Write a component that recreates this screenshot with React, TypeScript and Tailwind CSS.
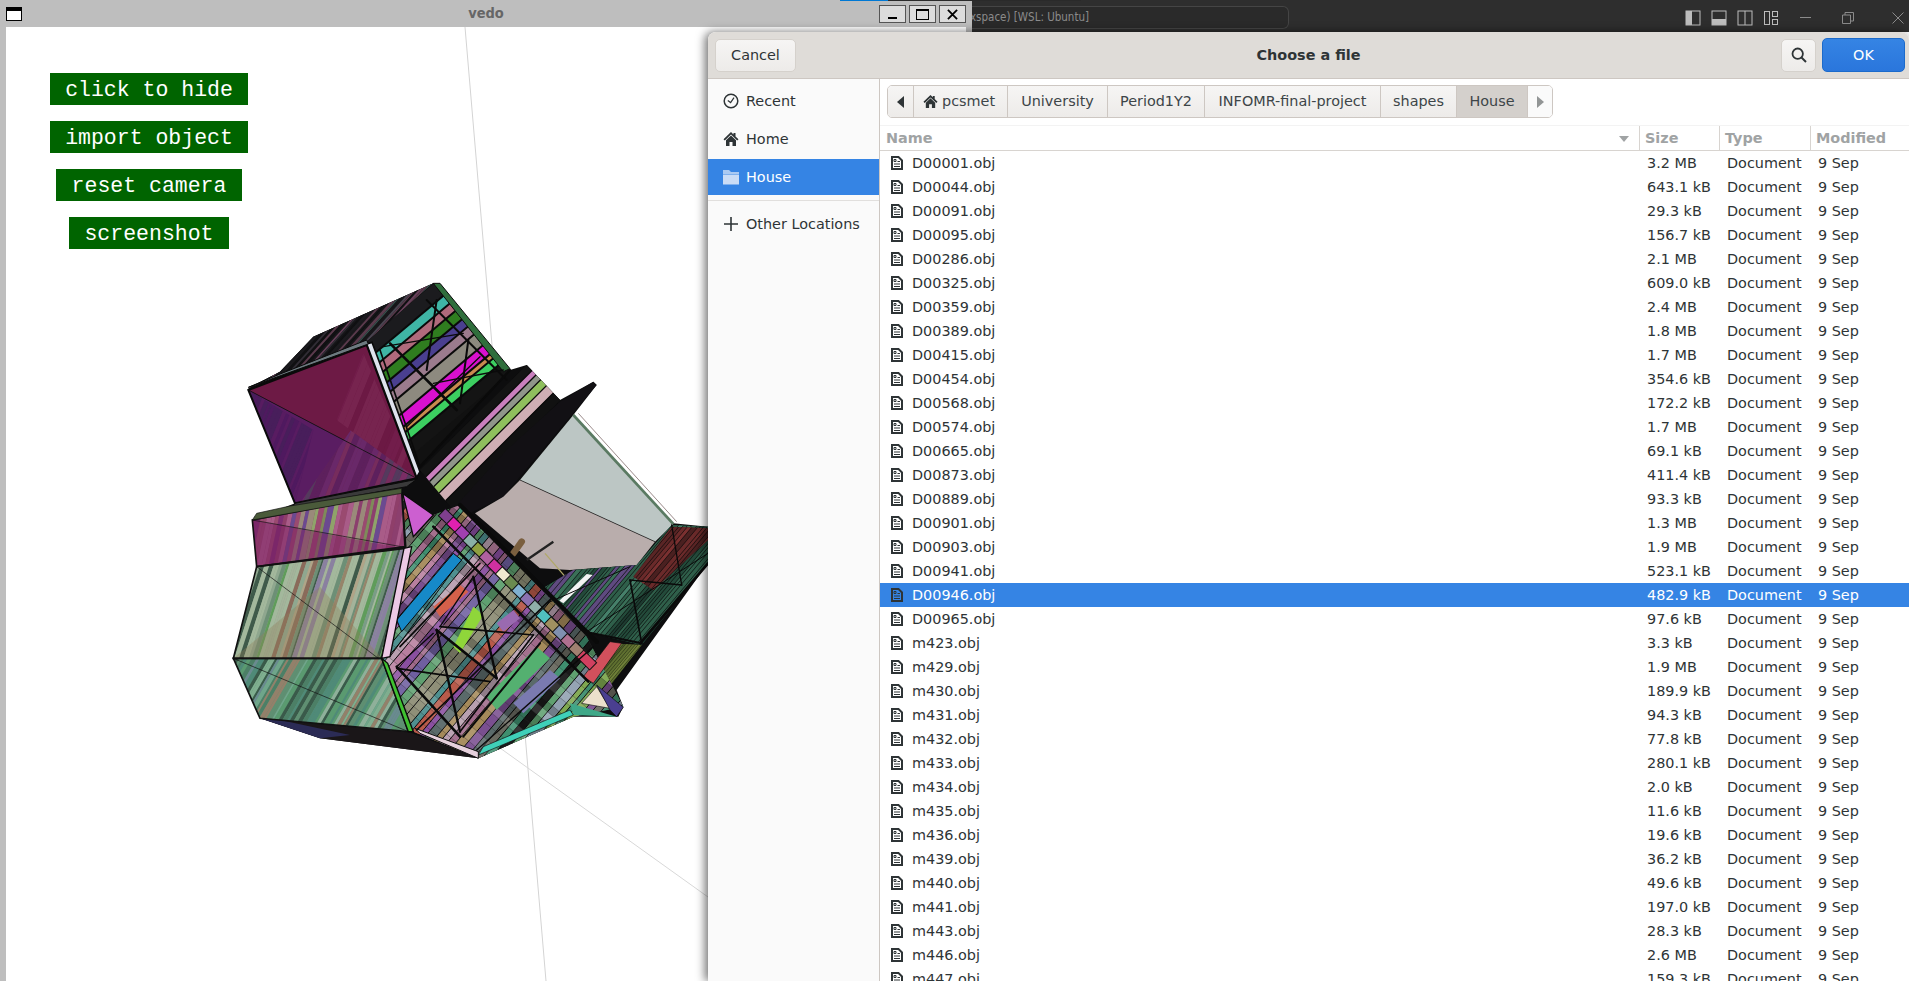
import { useId } from 'react'

type Row = { name: string; size: string; selected?: boolean }

const ROWS: Row[] = [
  { name: 'D00001.obj', size: '3.2 MB' },
  { name: 'D00044.obj', size: '643.1 kB' },
  { name: 'D00091.obj', size: '29.3 kB' },
  { name: 'D00095.obj', size: '156.7 kB' },
  { name: 'D00286.obj', size: '2.1 MB' },
  { name: 'D00325.obj', size: '609.0 kB' },
  { name: 'D00359.obj', size: '2.4 MB' },
  { name: 'D00389.obj', size: '1.8 MB' },
  { name: 'D00415.obj', size: '1.7 MB' },
  { name: 'D00454.obj', size: '354.6 kB' },
  { name: 'D00568.obj', size: '172.2 kB' },
  { name: 'D00574.obj', size: '1.7 MB' },
  { name: 'D00665.obj', size: '69.1 kB' },
  { name: 'D00873.obj', size: '411.4 kB' },
  { name: 'D00889.obj', size: '93.3 kB' },
  { name: 'D00901.obj', size: '1.3 MB' },
  { name: 'D00903.obj', size: '1.9 MB' },
  { name: 'D00941.obj', size: '523.1 kB' },
  { name: 'D00946.obj', size: '482.9 kB', selected: true },
  { name: 'D00965.obj', size: '97.6 kB' },
  { name: 'm423.obj', size: '3.3 kB' },
  { name: 'm429.obj', size: '1.9 MB' },
  { name: 'm430.obj', size: '189.9 kB' },
  { name: 'm431.obj', size: '94.3 kB' },
  { name: 'm432.obj', size: '77.8 kB' },
  { name: 'm433.obj', size: '280.1 kB' },
  { name: 'm434.obj', size: '2.0 kB' },
  { name: 'm435.obj', size: '11.6 kB' },
  { name: 'm436.obj', size: '19.6 kB' },
  { name: 'm439.obj', size: '36.2 kB' },
  { name: 'm440.obj', size: '49.6 kB' },
  { name: 'm441.obj', size: '197.0 kB' },
  { name: 'm443.obj', size: '28.3 kB' },
  { name: 'm446.obj', size: '2.6 MB' },
  { name: 'm447.obj', size: '159.3 kB' },
]

const VEDO_BUTTONS = ['click to hide', 'import object', 'reset camera', 'screenshot']
const CRUMBS = ['University', 'Period1Y2', 'INFOMR-final-project', 'shapes']
const CRUMB_WIDTHS = ['w-[100px]', 'w-[97px]', 'w-[176px]', 'w-[76px]']

// small seeded rng so the mesh stays the same between renders
function rng(seed: number) {
  let s = seed
  return () => {
    s = (s * 16807) % 2147483647
    return s / 2147483647
  }
}

type Band = [string, number]

// bands laid out across a polygon, perpendicular to `angle`
function Stripes({
  pts,
  angle,
  start,
  bands,
  base = '#222',
  opacity = 1,
  edge = '#0a0a0a',
  edgeWidth = 1.5,
}: {
  pts: string
  angle: number
  start: number
  bands: Band[]
  base?: string
  opacity?: number
  edge?: string
  edgeWidth?: number
}) {
  const id = useId()
  const a = (angle * Math.PI) / 180
  const dx = Math.cos(a)
  const dy = Math.sin(a)
  const nx = -dy
  const ny = dx
  let pos = start
  return (
    <g>
      <clipPath id={id}>
        <polygon points={pts} />
      </clipPath>
      <polygon points={pts} fill={base} />
      <g clipPath={`url(#${id})`} opacity={opacity}>
        {bands.map(([color, w], i) => {
          const mid = pos + w / 2
          pos += w
          const cx = nx * mid
          const cy = ny * mid
          return (
            <line
              key={i}
              x1={cx - dx * 3000}
              y1={cy - dy * 3000}
              x2={cx + dx * 3000}
              y2={cy + dy * 3000}
              stroke={color}
              strokeWidth={w}
            />
          )
        })}
        {edgeWidth > 0 &&
          bands.map((_, i) => {
            const off = bands.slice(0, i).reduce((n, b) => n + b[1], start)
            const cx = nx * off
            const cy = ny * off
            return (
              <line
                key={i}
                x1={cx - dx * 3000}
                y1={cy - dy * 3000}
                x2={cx + dx * 3000}
                y2={cy + dy * 3000}
                stroke={edge}
                strokeWidth={edgeWidth}
              />
            )
          })}
      </g>
    </g>
  )
}

function randomBands(seed: number, palette: string[], count: number, min: number, max: number): Band[] {
  const r = rng(seed)
  return Array.from({ length: count }, () => [
    palette[Math.floor(r() * palette.length)],
    min + r() * (max - min),
  ])
}

const DARKS = ['#1b1a1e', '#302c34', '#4a4450', '#17171a', '#35504c', '#5a3a4c', '#1b1a1e', '#68405a', '#101012']
const PINKS = ['#8c3f6e', '#a95c88', '#7f8a5a', '#9a8a7a', '#6b4a90', '#a85a88', '#8fa36a', '#9a4a70', '#8f3f6a', '#7d2f72']
const SAGE = ['#8fa78f', '#a4b39a', '#6d8f76', '#b0a488', '#7a9c86', '#96846a', '#5f9c5a', '#8a80a0', '#a3b89c', '#8a6a5a', '#a3b89c', '#3f5a4a']
const GREENS = ['#5f8f72', '#6fa58a', '#4c7f66', '#7fae8f', '#4f8a78', '#8fb09a', '#93806a', '#5a9a70', '#6a8a90', '#3a5a4a']
const MIXED = ['#8f8f78', '#6f5fa0', '#a06a8a', '#5fa070', '#b85a4a', '#7fa850', '#8a4fa0', '#b9a0b0', '#5a6a6a', '#4f9090', '#a58a5a', '#7a4f90', '#b87f9f', '#3f8f6f', '#90a0b0', '#6a6a60', '#1a1a1a']
const TRUSS = ['#2f5f4a', '#234a3a', '#3a7058', '#1d3b30', '#46806a', '#2f5f4a', '#5f4a80']
const CELLS = ['#7f3f8f', '#e020b0', '#a040b0', '#8ab0a8', '#8fa040', '#b060a0', '#d030a0', '#f0e8d0', '#6a8a50', '#80b0d0', '#8a70b0', '#8fb0a8', '#50c0c0', '#a09060', '#8090b0', '#b07090', '#a08070', '#d04060']

const THICK: [number, number, number, number, number][] = [
  [640, 770, 1105, 1235, 8],
  [720, 705, 1130, 1115, 13],
  [530, 1190, 720, 1400, 8],
  [650, 1080, 830, 1225, 8],
  [760, 920, 830, 1225, 7],
  [650, 1080, 720, 1385, 7],
  [660, 1070, 940, 1095, 5],
  [530, 1195, 810, 1235, 5],
  [640, 1090, 530, 1190, 4],
  [940, 1095, 720, 1385, 5],
  [760, 920, 660, 1070, 4],
  [620, 300, 650, 90, 6],
  [510, 220, 710, 420, 8],
  [745, 210, 720, 400, 6],
  [490, 230, 730, 190, 4],
  [640, 340, 850, 300, 4],
  [620, 90, 860, 330, 6],
  [480, 240, 600, 590, 5],
  [600, 590, 870, 300, 7],
  [560, 470, 780, 260, 4],
  [1230, 930, 1265, 1120, 5],
  [1230, 930, 1385, 945, 5],
  [1355, 765, 1385, 945, 4],
  [1095, 1085, 1265, 1120, 6],
  [1100, 1085, 1464, 850, 3],
  [1260, 1120, 1464, 880, 8],
  [590, 1380, 1000, 980, 5],
  [770, 1440, 1120, 1130, 4],
  [730, 1400, 960, 1120, 6],
  [540, 1130, 780, 880, 5],
  [510, 1160, 700, 900, 3],
  [980, 1000, 1230, 890, 3],
]

const SILHOUETTE =
  '85,355 180,305 280,200 640,40 870,300 920,285 1020,390 1120,335 1130,345 1060,435 1360,760 1464,770 1464,880 1190,1260 1210,1310 1195,1340 1060,1340 775,1465 300,1405 120,1345 40,1165 110,890 97,750 225,700'

const SPINE_STEPS = CELLS.map((color, i) => {
  const t = i / (CELLS.length - 1)
  return { color, x: 685 + t * 415, y: 745 + t * 425 }
})

function Model() {
  return (
    <svg viewBox="0 0 1500 1500" className="absolute left-[214px] top-[243px] h-[500px] w-[500px]">
      <polygon points={SILHOUETTE} fill="#0d0d0e" />

      {/* roof and bottom */}
      <Stripes pts="85,355 180,305 280,200 640,40 445,212" angle={-48} start={290} bands={randomBands(7, DARKS, 40, 3, 9)} base="#141416" edgeWidth={0} />
      <polygon points="120,1345 565,1385 775,1465 300,1405" fill="#1a1618" />
      <polygon points="120,1345 300,1405 390,1395 180,1350" fill="#2b2b55" />

      {/* top frame */}
      <Stripes
        pts="440,215 640,40 870,300 600,590"
        angle={-40}
        start={440}
        base="#111"
        edgeWidth={6}
        bands={[
          ['#1b1b1e', 50],
          ['#3fb5a5', 30],
          ['#b06a7c', 28],
          ['#2f7d1f', 32],
          ['#4a3f90', 28],
          ['#9b7b8d', 30],
          ['#8d8a7f', 42],
          ['#d910cf', 34],
          ['#c98a4f', 16],
          ['#3ccf60', 26],
          ['#141414', 40],
        ]}
      />
      <polygon points="640,40 660,40 870,296 850,305" fill="#2f6e3c" stroke="#0a0a0a" strokeWidth={3} />

      {/* pyramid */}
      <polygon points="85,360 440,225 590,625" fill="#6d1a45" />
      <polygon points="85,360 590,625 225,700" fill="#5a1d62" />
      <Stripes pts="240,700 400,470 590,625" angle={-68} start={470} bands={randomBands(11, ['#7a2f5f', '#6a2a6f', '#5a2060', '#80306a', '#4f4060'], 24, 8, 20)} base="#6a2458" edgeWidth={0} opacity={0.8} />
      <Stripes pts="350,450 430,250 590,625" angle={-68} start={480} bands={randomBands(13, ['#75204f', '#6d1a45', '#7d2a55'], 24, 8, 20)} base="#6d1a45" edgeWidth={0} opacity={0.7} />
      <Stripes pts="85,360 280,480 225,700" angle={-68} start={200} bands={randomBands(15, ['#4f1a60', '#5a1d62', '#46205a'], 30, 6, 14)} base="#4f1a60" edgeWidth={0} opacity={0.8} />
      <line x1="85" y1="360" x2="590" y2="625" stroke="#111" strokeWidth={2.5} />
      <polygon points="85,360 440,225 590,625 225,700" fill="none" stroke="#0a0a0a" strokeWidth={6} />
      <polygon points="440,222 456,217 600,605 590,622" fill="#dfe3ee" stroke="#0a0a0a" strokeWidth={5} />
      <polygon points="85,352 180,312 440,210 445,222" fill="#6d7a80" stroke="#0a0a0a" strokeWidth={3} />
      <polygon points="225,700 590,628 560,650 215,712" fill="#3a3a3a" stroke="#0a0a0a" strokeWidth={3} />

      {/* mid bands and fin */}
      <Stripes
        pts="600,600 920,285 1020,390 700,720"
        angle={-45}
        start={810}
        base="#111"
        edgeWidth={4}
        bands={[
          ['#141414', 65],
          ['#c97fbe', 18],
          ['#8f968a', 20],
          ['#8fbf5d', 25],
          ['#cfaeb4', 30],
          ['#111', 60],
        ]}
      />
      <polygon points="1120,335 1130,345 1050,440 850,680 750,730 715,700 860,540 1020,395" fill="#121014" />

      {/* gray panels */}
      <polygon points="1060,435 1360,762 1305,815 900,630" fill="#bcc6c4" />
      <polygon points="900,630 1305,815 1250,885 1050,900 960,895 765,730 850,680" fill="#b9adac" />
      <line x1="900" y1="630" x2="1305" y2="815" stroke="#111" strokeWidth={2} />
      <line x1="1060" y1="435" x2="1360" y2="762" stroke="#5a7a62" strokeWidth={8} />
      <line x1="1075" y1="430" x2="1370" y2="755" stroke="#9a8a8a" strokeWidth={3} />
      <line x1="880" y1="850" x2="905" y2="815" stroke="#7a5f3f" strokeWidth={20} strokeLinecap="round" />
      <line x1="920" y1="870" x2="1000" y2="815" stroke="#222" strokeWidth={7} />
      <line x1="975" y1="850" x2="1040" y2="925" stroke="#b0a86a" strokeWidth={4} />

      {/* right truss */}
      <Stripes pts="1355,765 1464,770 1464,880 1265,1125 1095,1085 960,960 1060,900 1250,885" angle={-50} start={1340} bands={randomBands(19, TRUSS, 40, 7, 14)} base="#1c3a30" edgeWidth={2} />
      <Stripes pts="1240,920 1355,770 1464,775 1464,810 1300,960" angle={-50} start={1530} bands={randomBands(23, ['#6a2a2a', '#5a2525', '#7a3030', '#4a2020'], 16, 8, 14)} base="#4a2020" edgeWidth={2} />
      <polygon points="1100,912 1118,915 1030,1000 1018,992" fill="#f4f4f4" />
      <Stripes pts="1170,1120 1265,1125 1160,1260 1130,1240" angle={-50} start={1600} bands={randomBands(29, ['#5f7030', '#4a5a28', '#6f8038', '#2f3a20'], 30, 5, 8)} base="#3a4a20" edgeWidth={1} />

      {/* big front section */}
      <Stripes pts="548,670 640,735 720,705 1100,1100 1210,1310 1060,1340 775,1465 580,1385 485,1165 560,830" angle={-50} start={700} bands={randomBands(31, MIXED, 60, 12, 28)} base="#3a3a3a" edgeWidth={3} />
      <Stripes
        pts="548,670 640,735 720,705 1100,1100 1210,1310 1060,1340 775,1465 580,1385 485,1165 560,830"
        angle={40}
        start={-700}
        base="none"
        edgeWidth={1}
        edge="#2a2a2a"
        bands={randomBands(33, ['rgba(0,0,0,0.22)', 'rgba(255,255,255,0.12)', 'rgba(0,0,0,0)', 'rgba(255,255,255,0.05)'], 70, 20, 40)}
      />
      <polygon points="530,1050 700,850 725,870 545,1085" fill="#1689c8" stroke="#0a0a0a" strokeWidth={3} />
      <polygon points="700,1130 760,1010 790,1035 720,1150" fill="#8fd63a" />
      <polygon points="640,1010 720,945 745,965 660,1040" fill="#d5604a" />
      <polygon points="830,1060 880,1020 900,1045 850,1085" fill="#9a6ab0" />
      <polygon points="800,1280 950,1130 990,1165 830,1320" fill="#54b070" />
      <polygon points="880,1300 990,1200 1020,1225 910,1330" fill="#7a7ab0" />
      <polygon points="1090,1220 1170,1115 1205,1120 1120,1240" fill="#d2505c" stroke="#111" strokeWidth={2} />
      <polygon points="1085,1300 1130,1250 1170,1315" fill="#ece0cc" stroke="#222" strokeWidth={2} />
      <polygon points="1130,1245 1210,1312 1190,1340 1170,1320" fill="#4a3f90" stroke="#111" strokeWidth={2} />
      <polygon points="1060,1335 1190,1340 1050,1300" fill="#3fa888" />
      <polygon points="775,1455 1060,1335 1050,1320 790,1430" fill="#3fd0b8" stroke="#111" strokeWidth={2} />
      <polygon points="585,1375 775,1445 775,1465 600,1390" fill="#e6d0dc" stroke="#111" strokeWidth={3} />

      {/* cells along the spine */}
      {SPINE_STEPS.map((cell, i) => (
        <rect
          key={i}
          x={cell.x - 15}
          y={cell.y - 27}
          width={30}
          height={54}
          fill={cell.color}
          stroke="#111"
          strokeWidth={3}
          transform={`rotate(-46 ${cell.x} ${cell.y})`}
        />
      ))}

      {/* left body */}
      <Stripes pts="97,750 545,665 555,830 110,890" angle={-78} start={240} bands={randomBands(37, PINKS, 36, 8, 18)} base="#8c3f6e" edgeWidth={0} />
      <polygon points="97,750 545,835 110,890" fill="#7a1f5f" opacity={0.5} />
      <Stripes pts="110,890 555,835 485,1165 40,1165" angle={-72} start={380} bands={randomBands(41, SAGE, 50, 5, 14)} base="#8fa78f" edgeWidth={0} />
      <polygon points="40,1165 300,950 485,1165" fill="#8f7f5a" opacity={0.35} />
      <line x1="110" y1="890" x2="475" y2="1165" stroke="#111" strokeWidth={2} />
      <Stripes pts="40,1165 485,1165 565,1385 120,1345" angle={-60} start={600} bands={randomBands(43, GREENS, 60, 5, 15)} base="#5f8f72" edgeWidth={0} />
      <line x1="40" y1="1165" x2="565" y2="1385" stroke="#111" strokeWidth={2} />
      <polygon points="97,750 545,665 555,830 110,890" fill="none" stroke="#111" strokeWidth={5} />
      <polygon points="110,890 555,835 485,1165 40,1165" fill="none" stroke="#111" strokeWidth={5} />
      <polygon points="40,1165 485,1165 565,1385 120,1345" fill="none" stroke="#111" strokeWidth={5} />
      <polygon points="97,750 110,730 210,708 545,655 545,670" fill="#4a5a3a" stroke="#111" strokeWidth={2} />
      <line x1="97" y1="750" x2="555" y2="832" stroke="#111" strokeWidth={2} />
      <polygon points="548,670 640,735 580,800" fill="#cc5fd0" stroke="#0a0a0a" strokeWidth={4} />
      <polygon points="552,835 575,830 510,1160 485,1165" fill="#ecc8e4" stroke="#0a0a0a" strokeWidth={4} />
      <polygon points="485,1165 503,1180 580,1385 565,1385" fill="#3fc030" stroke="#0a0a0a" strokeWidth={4} />

      {THICK.map(([x1, y1, x2, y2, w], i) => (
        <line key={i} x1={x1} y1={y1} x2={x2} y2={y2} stroke="#0a0a0a" strokeWidth={w} strokeLinecap="round" />
      ))}
    </svg>
  )
}

function FileIcon() {
  return (
    <svg viewBox="0 0 12 14" className="h-[14px] w-[12px] shrink-0">
      <path d="M1 1h6.5L11 4.5V13H1z" fill="none" stroke="#2e3436" strokeWidth="2" strokeLinejoin="miter" />
      <path d="M3 3.5h2v2H3z" fill="none" stroke="#2e3436" strokeWidth="1" />
      <path d="M3 8h6M3 10.5h6M6.5 5.5H9" stroke="#2e3436" strokeWidth="1" fill="none" />
    </svg>
  )
}

function HomeIcon({ className }: { className: string }) {
  return (
    <svg viewBox="0 0 16 16" className={className}>
      <path d="M8 1 0.5 8.2 1.8 9.5 8 3.6l6.2 5.9 1.3-1.3L12.5 5.4V2h-2v1.5z" fill="#2e3436" />
      <path d="M3 9.2V15h3.5v-4h3v4H13V9.2L8 4.6z" fill="#2e3436" />
    </svg>
  )
}

function SidebarRow({ label, icon, active }: { label: string; icon: React.ReactNode; active?: boolean }) {
  return (
    <div className={`flex h-[36px] items-center gap-[7px] pl-[15px] ${active ? 'bg-[#3584e4] text-white' : 'text-[#2e3436]'}`}>
      <span className="flex h-4 w-4 items-center justify-center">{icon}</span>
      <span className="pt-px">{label}</span>
    </div>
  )
}

export default function App() {
  return (
    <div className="relative h-[981px] w-[1909px] overflow-hidden bg-white font-['DejaVu_Sans',sans-serif] text-[14.4px]">
      {/* vs code behind everything */}
      <div className="absolute left-[972px] top-0 flex h-[32px] w-[937px] items-center bg-[#2e2e2e]">
        <div className="mt-[3px] flex h-[23px] w-[317px] items-center overflow-hidden rounded-r-[6px] border border-l-0 border-[#454545] bg-[#2a2a2a] pt-px">
          <span className="ml-[-2px] whitespace-nowrap font-['DejaVu_Sans_Condensed','DejaVu_Sans',sans-serif] text-[11.5px] text-[#8b8b8b]">
            xspace) [WSL: Ubuntu]
          </span>
        </div>
        <div className="ml-auto flex items-center pr-[5px] pt-[3px]">
          <svg viewBox="0 0 16 16" className="mr-[10px] h-[16px] w-[16px]">
            <rect x="1" y="1" width="14" height="14" fill="none" stroke="#bdbdbd" />
            <rect x="1" y="1" width="6" height="14" fill="#bdbdbd" />
          </svg>
          <svg viewBox="0 0 16 16" className="mr-[10px] h-[16px] w-[16px]">
            <rect x="1" y="1" width="14" height="14" fill="none" stroke="#bdbdbd" />
            <rect x="1" y="9" width="14" height="6" fill="#bdbdbd" />
          </svg>
          <svg viewBox="0 0 16 16" className="mr-[10px] h-[16px] w-[16px]">
            <rect x="1" y="1" width="14" height="14" fill="none" stroke="#bdbdbd" />
            <path d="M8 1v14" stroke="#bdbdbd" />
          </svg>
          <svg viewBox="0 0 16 16" className="mr-[21px] h-[16px] w-[16px]">
            <rect x="1.5" y="1.5" width="5" height="13" fill="none" stroke="#bdbdbd" />
            <rect x="9.5" y="1.5" width="5" height="5" fill="none" stroke="#bdbdbd" />
            <rect x="9.5" y="9.5" width="5" height="5" fill="none" stroke="#bdbdbd" />
          </svg>
          <span className="mr-[31px] h-px w-[11px] bg-[#8b8b8b]" />
          <svg viewBox="0 0 12 12" className="mr-[38px] h-[12px] w-[12px]">
            <path d="M.5 3h8v8.5h-8zM3 3V.5h8.5V9H9" fill="none" stroke="#8b8b8b" />
          </svg>
          <svg viewBox="0 0 12 12" className="h-[12px] w-[12px]">
            <path d="M.5.5l11 11M11.5.5l-11 11" fill="none" stroke="#8b8b8b" />
          </svg>
        </div>
      </div>

      {/* vedo window */}
      <div className="absolute left-0 top-0 flex h-[981px] w-[972px] flex-col bg-[#bebebe]">
        <div className="relative flex h-[27px] shrink-0 items-center justify-center">
          <div className="absolute left-[6px] top-[7px] h-[14px] w-[16px] border border-black border-t-[4px] bg-white" />
          <span className="font-['DejaVu_Sans_Condensed','DejaVu_Sans',sans-serif] text-[14.5px] font-bold text-[#666]">vedo</span>
          <div className="absolute left-[879px] top-[5px] flex gap-[3px]">
            <div className="flex h-[18px] w-[27px] items-end justify-center border border-[#555] bg-[#dcdcdc] pb-[3px]">
              <span className="h-[2px] w-[9px] bg-black" />
            </div>
            <div className="flex h-[18px] w-[27px] items-center justify-center border border-[#555] bg-[#dcdcdc]">
              <span className="h-[11px] w-[13px] border border-black border-t-[2px]" />
            </div>
            <div className="flex h-[18px] w-[27px] items-center justify-center border border-[#555] bg-[#dcdcdc]">
              <svg viewBox="0 0 12 12" className="h-[11px] w-[11px]">
                <path d="M1 1l10 10M11 1 1 11" stroke="#000" strokeWidth="2" />
              </svg>
            </div>
          </div>
        </div>
        <div className="relative ml-[6px] mr-[6px] flex flex-1 flex-col items-center bg-white">
          <svg className="absolute inset-0 h-full w-full">
            <line x1="459" y1="0" x2="540" y2="954" stroke="#d4d4d4" />
            <line x1="494" y1="721" x2="702" y2="870" stroke="#d8d8d8" />
          </svg>
          <Model />
          <div className="relative mr-[674px] mt-[46px] flex flex-col items-center gap-4">
            {VEDO_BUTTONS.map((label) => (
              <div
                key={label}
                className="flex h-[32px] items-center bg-[#006400] px-[15.5px] pt-[3px] font-['Liberation_Mono',monospace] text-[21.5px] text-white"
              >
                {label}
              </div>
            ))}
          </div>
        </div>
      </div>

      {/* tab strip sliver on top of the vedo title bar */}
      <div className="absolute left-[840px] top-0 flex h-px">
        <span className="w-[48px] bg-[#0078d4]" />
        <span className="w-[193px] bg-[#2a2a2a]" />
      </div>

      {/* file chooser */}
      <div className="absolute bottom-0 left-[708px] right-0 top-[32px] flex flex-col overflow-hidden rounded-t-[8px] bg-white shadow-[-3px_0_10px_rgba(0,0,0,0.55)]">
        <header className="grid h-[47px] shrink-0 grid-cols-[1fr_auto_1fr] items-center border-b border-[#cdc7c2] bg-[#dfdcd8] px-[7px] text-[#2e3436]">
          <div>
            <button type="button" className="h-[33px] w-[81px] rounded-[5px] border border-[#d5d1cc] bg-linear-to-b from-[#f6f5f4] to-[#edebe9] pt-px">
              Cancel
            </button>
          </div>
          <h1 className="pt-px font-bold">Choose a file</h1>
          <div className="flex items-center justify-end gap-[6px]">
            <button type="button" className="flex h-[33px] w-[35px] items-center justify-center rounded-[5px] border border-[#d5d1cc] bg-linear-to-b from-[#f6f5f4] to-[#edebe9]">
              <svg viewBox="0 0 16 16" className="h-4 w-4">
                <circle cx="6.7" cy="6.7" r="5.2" fill="none" stroke="#2e3436" strokeWidth="1.8" />
                <path d="M10.5 10.5 15 15" stroke="#2e3436" strokeWidth="2" />
              </svg>
            </button>
            <button type="button" className="mr-[-3px] h-[34px] w-[83px] rounded-[5px] border border-[#1b6acb] bg-linear-to-b from-[#3584e4] to-[#2a76dc] pt-px text-white">
              OK
            </button>
          </div>
        </header>

        <div className="flex min-h-0 flex-1">
          <aside className="flex w-[172px] shrink-0 flex-col gap-[2px] border-r border-[#cdc7c2] bg-[#fafafa] pt-[4px]">
            <SidebarRow
              label="Recent"
              icon={
                <svg viewBox="0 0 16 16" className="h-[16px] w-[16px]">
                  <circle cx="8" cy="8" r="6.8" fill="none" stroke="#2e3436" strokeWidth="1.5" />
                  <path d="M4.8 7.5 7.6 9.6 11 4.6" fill="none" stroke="#2e3436" strokeWidth="1.2" />
                </svg>
              }
            />
            <SidebarRow label="Home" icon={<HomeIcon className="h-[16px] w-[16px]" />} />
            <SidebarRow
              label="House"
              active
              icon={
                <svg viewBox="0 0 16 16" className="h-[16px] w-[16px]">
                  <path d="M0 1h6l2 2h8v2H0z" fill="#a9c9f2" />
                  <path d="M0 5.5h16V15.5H0z" fill="#c9dcf6" />
                </svg>
              }
            />
            <div className="mx-0 my-[3px] h-px bg-[#e1dfdd]" />
            <SidebarRow
              label="Other Locations"
              icon={
                <svg viewBox="0 0 16 16" className="h-[16px] w-[16px]">
                  <path d="M8 1v14M1 8h14" stroke="#2e3436" strokeWidth="1.6" />
                </svg>
              }
            />
          </aside>

          <main className="flex min-w-0 flex-1 flex-col">
            <div className="h-[47px] shrink-0 border-b border-[#f3f3f3] pl-[7px] pt-[6px]">
              <div className="flex h-[33px] w-[666px] overflow-hidden rounded-[5px] border border-[#cdc7c2] text-[#3d4548]">
                <div className="flex w-[26px] items-center justify-center border-r border-[#cdc7c2] bg-linear-to-b from-[#f6f5f4] to-[#edebe9]">
                  <svg viewBox="0 0 8 12" className="h-[12px] w-[8px]">
                    <path d="M7 0v12L0 6z" fill="#2e3436" />
                  </svg>
                </div>
                <div className="flex w-[94px] items-center gap-[4px] border-r border-[#cdc7c2] bg-linear-to-b from-[#f6f5f4] to-[#edebe9] pl-[9px]">
                  <HomeIcon className="h-[15px] w-[15px]" />
                  <span className="pt-px">pcsmet</span>
                </div>
                {CRUMBS.map((crumb, i) => (
                  <div key={crumb} className={`flex ${CRUMB_WIDTHS[i]} items-center justify-center border-r border-[#cdc7c2] bg-linear-to-b from-[#f6f5f4] to-[#edebe9] pt-px`}>
                    {crumb}
                  </div>
                ))}
                <div className="flex w-[71px] items-center justify-center border-r border-[#cdc7c2] bg-[#d4d0cc] pt-px">House</div>
                <div className="flex flex-1 items-center justify-center bg-[#fafafa]">
                  <svg viewBox="0 0 8 12" className="h-[12px] w-[8px]">
                    <path d="M1 0v12l7-6z" fill="#929595" />
                  </svg>
                </div>
              </div>
            </div>

            <div className="grid h-[25px] shrink-0 grid-cols-[759px_80px_91px_1fr] items-center border-b border-[#d8d4d0] font-bold text-[#a0a3a4]">
              <div className="flex h-full items-center justify-between pl-[6px] pr-[10px] pt-px">
                <span>Name</span>
                <svg viewBox="0 0 10 6" className="h-[6px] w-[10px]">
                  <path d="M0 0h10L5 6z" fill="#a0a3a4" />
                </svg>
              </div>
              <div className="flex h-full items-center border-l border-[#d8d4d0] pl-[5px] pt-px">Size</div>
              <div className="flex h-full items-center border-l border-[#d8d4d0] pl-[5px] pt-px">Type</div>
              <div className="flex h-full items-center border-l border-[#d8d4d0] pl-[5px] pt-px">Modified</div>
            </div>

            <div className="min-h-0 flex-1 overflow-hidden">
              {ROWS.map((row) => (
                <div
                  key={row.name}
                  className={`grid h-[24px] grid-cols-[759px_80px_91px_1fr] items-center pt-px ${row.selected ? 'bg-[#3584e4] text-white' : 'text-[#2e3436]'}`}
                >
                  <div className="flex items-center gap-[9px] pl-[11px]">
                    <FileIcon />
                    <span>{row.name}</span>
                  </div>
                  <div className="pl-[8px]">{row.size}</div>
                  <div className="pl-[8px]">Document</div>
                  <div className="pl-[8px]">9 Sep</div>
                </div>
              ))}
            </div>
          </main>
        </div>
      </div>
    </div>
  )
}
